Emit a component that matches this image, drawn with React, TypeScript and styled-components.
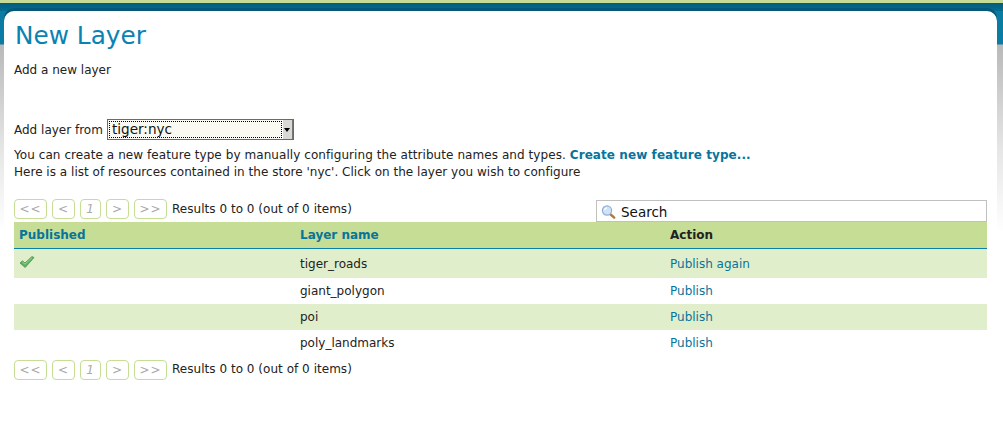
import React from "react";
import styled, { createGlobalStyle } from "styled-components";

const Global = createGlobalStyle`
  html, body { margin: 0; padding: 0; background: #fff; }
  body { font-family: "DejaVu Sans", sans-serif; font-size: 12px; color: #222; }
`;

const Page = styled.div`
  width: 1003px;
  height: 430px;
  overflow: hidden;
  display: flex;
  flex-direction: column;
  background: linear-gradient(to bottom, #0a7ca3 0, #0a7ca3 10px, #0b7da4 44px, #b9b9b9 45px, #e6e6e6 150px, #ffffff 232px);
`;

const TopStripe = styled.div`
  height: 3px;
  flex: none;
  background: #c6dc96;
`;

const Shade = styled.div`
  height: 8px;
  flex: none;
  background: linear-gradient(to bottom, #045c7e, #066c92);
`;

const Panel = styled.main`
  flex: 1;
  margin: 0 6px 0 4px;
  padding: 8px 10px 0 10px;
  background: #fff;
  border-radius: 10px 10px 0 0;
  box-shadow: 0 -3px 0 #05587a;
`;

const Title = styled.h1`
  margin: 0;
  padding: 1px 0 0 1px;
  height: 34px;
  font-size: 24.75px;
  line-height: 32px;
  font-weight: 400;
  color: #0a82b2;
`;

const Lead = styled.p`
  margin: 8px 0 0;
  line-height: 16px;
`;

const FromRow = styled.div`
  display: flex;
  align-items: center;
  gap: 4px;
  margin-top: 41px;
  height: 21px;
`;

const FromLabel = styled.span`
  padding-top: 1px;
`;

const SelectBox = styled.div`
  box-sizing: border-box;
  width: 187px;
  height: 21px;
  display: flex;
  border: 1px solid #6a6a6a;
  background: #fafaf2;
`;

const SelectValue = styled.div`
  flex: 1;
  margin: 1px 0 1px 1px;
  padding-left: 2px;
  border: 1px dotted #000;
  font-size: 13.6px;
  line-height: 15px;
  color: #111;
`;

const SelectArrow = styled.div`
  width: 9px;
  display: flex;
  align-items: center;
  justify-content: center;
  background: #d8d8d4;
  border-left: 1px solid #fff;
  border-right: 1px solid #777;
  &::after {
    content: "";
    border-left: 3px solid transparent;
    border-right: 3px solid transparent;
    border-top: 4px solid #000;
  }
`;

const Info = styled.p<{ $track?: number }>`
  margin: 0;
  line-height: 17px;
  letter-spacing: ${(p) => p.$track ?? 0}px;
`;

const FirstInfo = styled(Info)`
  margin-top: 7px;
`;

const InfoLink = styled.a`
  font-weight: 700;
  color: #06749c;
  letter-spacing: 0.08px;
`;

const Toolbar = styled.div`
  display: flex;
  justify-content: space-between;
  margin-top: 18px;
  height: 23px;
`;

const Pager = styled.div<{ $top?: number }>`
  display: flex;
  align-items: center;
  height: 20px;
  margin-top: ${(p) => p.$top ?? 0}px;
`;

const PageButton = styled.span<{ $w: number; $italic?: boolean }>`
  box-sizing: border-box;
  width: ${(p) => p.$w}px;
  height: 20px;
  margin-right: 5px;
  border: 1px solid #c6dd96;
  border-radius: 4px;
  color: #aaa;
  font-style: ${(p) => (p.$italic ? "italic" : "normal")};
  font-size: 12px;
  line-height: 18px;
  text-align: center;
  letter-spacing: 1px;
`;

const Results = styled.span`
  line-height: 19px;
  letter-spacing: 0.03px;
`;

const Search = styled.div`
  box-sizing: border-box;
  width: 391px;
  height: 22px;
  margin-top: 1px;
  display: flex;
  align-items: center;
  gap: 5px;
  padding: 1px 0 0 4px;
  border: 1px solid #c0c0c0;
  background: #fff;
  font-size: 13.5px;
  color: #111;
`;

const Table = styled.table`
  width: 973px;
  border-collapse: collapse;
  table-layout: fixed;
`;

const Head = styled.th<{ $w?: number; $dark?: boolean }>`
  width: ${(p) => (p.$w ? `${p.$w}px` : "auto")};
  height: 26px;
  padding: 0 0 0 5px;
  text-align: left;
  font-weight: 700;
  background: #c6dd96;
  border-bottom: 1px solid #0a7fa8;
  color: ${(p) => (p.$dark ? "#222" : "#06749c")};
`;

const Row = styled.tr<{ $odd?: boolean; $h: number; $pad?: number }>`
  height: ${(p) => p.$h}px;
  background: ${(p) => (p.$odd ? "#e1eecb" : "#fff")};
  td { padding-top: ${(p) => p.$pad ?? 0}px; }
`;

const Cell = styled.td`
  padding: 0 0 0 5px;
  vertical-align: middle;
`;

const CheckCell = styled(Cell)`
  && { padding-top: 6px; }
  vertical-align: top;
  line-height: 0;
`;

const ActionLink = styled.a`
  color: #06749c;
`;

const Check = () => (
  <svg width="16" height="14" viewBox="0 0 16 14">
    <path d="M1 8 L3.5 5.8 L6 8 L13 1.5 L15 2.6 L6.2 12.5 Z" fill="#5cb35c" stroke="#4c8f58" strokeWidth="0.8" strokeLinejoin="round" />
    <path d="M3.2 6.8 L6 9.2 L13.2 2.6" fill="none" stroke="#a6dba6" strokeWidth="0.8" />
  </svg>
);

const Magnifier = () => (
  <svg width="15" height="14" viewBox="0 0 15 14">
    <path d="M8.5 8.5 L13.2 12.6" stroke="#b5773a" strokeWidth="2.4" strokeLinecap="round" />
    <circle cx="6" cy="5.5" r="4.6" fill="#cfe2f7" stroke="#8fb0d6" strokeWidth="1.2" />
    <path d="M3.5 5 A2.8 2.8 0 0 1 6 2.8" fill="none" stroke="#fff" strokeWidth="1.2" />
  </svg>
);

const PagerBar = ({ top }: { top?: number }) => (
  <Pager $top={top}>
    <PageButton $w={33}>&lt;&lt;</PageButton>
    <PageButton $w={23}>&lt;</PageButton>
    <PageButton $w={21} $italic>1</PageButton>
    <PageButton $w={23}>&gt;</PageButton>
    <PageButton $w={33}>&gt;&gt;</PageButton>
    <Results>Results 0 to 0 (out of 0 items)</Results>
  </Pager>
);

const rows = [
  { name: "tiger_roads", action: "Publish again", published: true, h: 29, pad: 2 },
  { name: "giant_polygon", action: "Publish", published: false, h: 26, pad: 0 },
  { name: "poi", action: "Publish", published: false, h: 26, pad: 0 },
  { name: "poly_landmarks", action: "Publish", published: false, h: 26, pad: 0 },
];

export default function App() {
  return (
    <Page>
      <Global />
      <TopStripe />
      <Shade />
      <Panel>
        <Title>New Layer</Title>
        <Lead>Add a new layer</Lead>
        <FromRow>
          <FromLabel>Add layer from</FromLabel>
          <SelectBox>
            <SelectValue>tiger:nyc</SelectValue>
            <SelectArrow />
          </SelectBox>
        </FromRow>
        <FirstInfo $track={0.07}>
          You can create a new feature type by manually configuring the attribute names and types.{" "}
          <InfoLink>Create new feature type...</InfoLink>
        </FirstInfo>
        <Info $track={0.02}>Here is a list of resources contained in the store 'nyc'. Click on the layer you wish to configure</Info>
        <Toolbar>
          <PagerBar />
          <Search>
            <Magnifier />
            <span>Search</span>
          </Search>
        </Toolbar>
        <Table>
          <thead>
            <tr>
              <Head $w={276}>Published</Head>
              <Head $w={365}>Layer name</Head>
              <Head $dark>Action</Head>
            </tr>
          </thead>
          <tbody>
            {rows.map((r, i) => (
              <Row key={r.name} $odd={i % 2 === 0} $h={r.h} $pad={r.pad}>
                {r.published ? <CheckCell><Check /></CheckCell> : <Cell />}
                <Cell>{r.name}</Cell>
                <Cell><ActionLink>{r.action}</ActionLink></Cell>
              </Row>
            ))}
          </tbody>
        </Table>
        <PagerBar top={4} />
      </Panel>
    </Page>
  );
}
